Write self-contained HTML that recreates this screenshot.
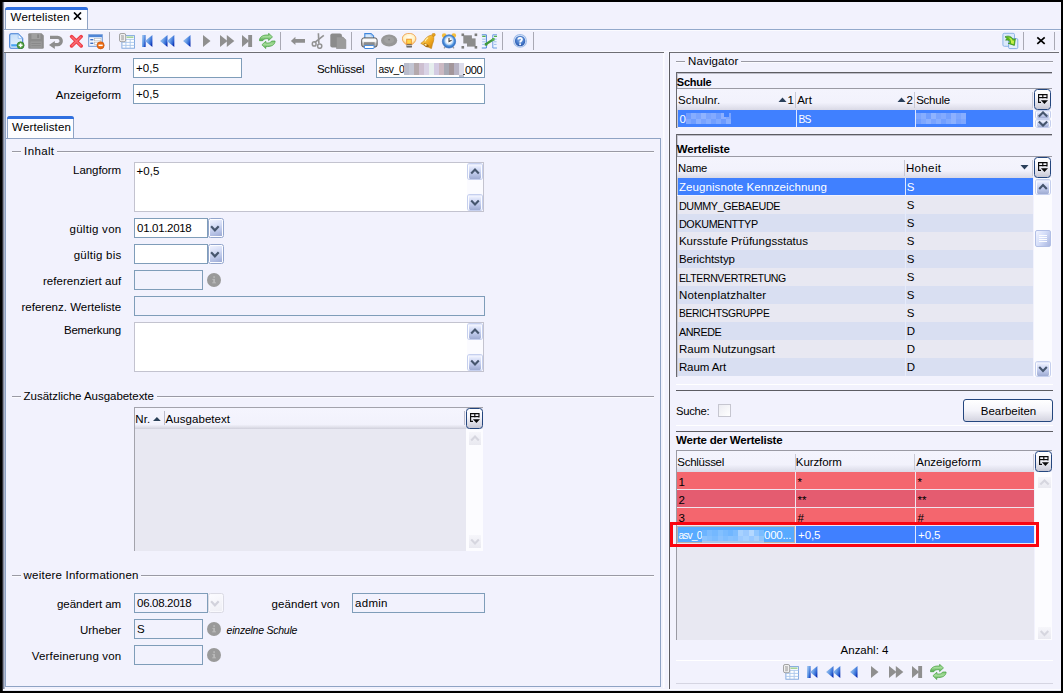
<!DOCTYPE html>
<html><head><meta charset="utf-8"><title>Wertelisten</title>
<style>
html,body{margin:0;padding:0;}
body{width:1063px;height:693px;overflow:hidden;background:#000;font-family:"Liberation Sans",sans-serif;font-size:11.5px;position:relative;}
#app{position:absolute;left:0;top:0;width:1063px;height:693px;overflow:hidden;}
#app div,#app svg{position:absolute;box-sizing:border-box;}
.t{font-family:"Liberation Sans",sans-serif;}
</style></head><body><div id="app">
<div style="left:2px;top:2px;width:1059px;height:689px;background:#f2f2fd"></div>
<div style="left:2px;top:689px;width:1059px;height:1px;background:#fbfbff"></div>
<div style="left:2px;top:690px;width:1059px;height:1px;background:#e4e6f0"></div>
<div style="left:2px;top:2px;width:1px;height:689px;background:#333338"></div>
<div style="left:3px;top:2px;width:1px;height:687px;background:#80869a"></div>
<div style="left:4px;top:2px;width:1px;height:50px;background:#e6e9f4"></div>
<div style="left:4px;top:52px;width:1px;height:637px;background:#b0b9cd"></div>
<div style="left:5px;top:52px;width:1px;height:87px;background:#8fa3c4"></div>
<div style="left:5px;top:7px;width:83px;height:23px;background:#fdfdff;border:1px solid #8fa3c4;border-bottom:none;border-radius:3px 3px 0 0;"></div>
<div style="left:5px;top:7px;width:83px;height:3px;background:#2f6fe0;border-radius:3px 3px 0 0;"></div>
<div class="t" style="top:12.17px;font-size:11.5px;line-height:11.5px;color:#000;white-space:pre;letter-spacing:0.181px;left:10.60px;">Wertelisten</div>
<svg style="left:73px;top:12px" width="9" height="8" viewBox="0 0 9 8"><path d="M1 0.5 L8 7.5 M8 0.5 L1 7.5" stroke="#000" stroke-width="1.7" fill="none"/></svg>
<div style="left:4px;top:29px;width:1057px;height:1px;background:#93a9cb"></div>
<div style="left:4px;top:30px;width:1057px;height:1px;background:#fbfbff"></div>
<div style="left:4px;top:52px;width:660px;height:1px;background:#6e6e74"></div>
<div style="left:669px;top:52px;width:390px;height:1px;background:#6e6e74"></div>
<div style="left:4px;top:51px;width:1055px;height:1px;background:#f9f9ff"></div>
<div style="left:109px;top:32px;width:1px;height:18px;background:#a9a9b4"></div>
<div style="left:280px;top:32px;width:1px;height:18px;background:#a9a9b4"></div>
<div style="left:351px;top:32px;width:1px;height:18px;background:#a9a9b4"></div>
<div style="left:502px;top:32px;width:1px;height:18px;background:#a9a9b4"></div>
<div style="left:533px;top:32px;width:1px;height:18px;background:#a9a9b4"></div>
<div style="left:1023px;top:32px;width:1px;height:18px;background:#a9a9b4"></div>
<div style="left:1054px;top:32px;width:1px;height:18px;background:#a9a9b4"></div>
<div class="t" style="top:64.17px;font-size:11.5px;line-height:11.5px;color:#000;white-space:pre;letter-spacing:-0.007px;right:941.81px;">Kurzform</div>
<div style="left:133px;top:58px;width:109px;height:20px;background:#fff;border:1px solid #7f9db9;"></div>
<div class="t" style="top:63.17px;font-size:11.5px;line-height:11.5px;color:#000;white-space:pre;letter-spacing:0.024px;left:136.10px;">+0,5</div>
<div class="t" style="top:64.17px;font-size:11.5px;line-height:11.5px;color:#000;white-space:pre;letter-spacing:-0.191px;left:316.90px;">Schlüssel</div>
<div style="left:376px;top:58px;width:109px;height:20px;background:#fff;border:1px solid #7f9db9;"></div>
<div class="t" style="top:65.22px;font-size:10.25px;line-height:10.25px;color:#000;white-space:pre;letter-spacing:-0.310px;left:378.60px;">asv_0</div>
<div style="left:404px;top:63px;width:5px;height:6px;background:#b9bccb"></div>
<div style="left:409px;top:63px;width:5px;height:6px;background:#c3c6d4"></div>
<div style="left:414px;top:63px;width:5px;height:6px;background:#b4a9ad"></div>
<div style="left:419px;top:63px;width:5px;height:6px;background:#cdbfd0"></div>
<div style="left:424px;top:63px;width:5px;height:6px;background:#d9d3e6"></div>
<div style="left:429px;top:63px;width:5px;height:6px;background:#e6efee"></div>
<div style="left:434px;top:63px;width:5px;height:6px;background:#d3cbe2"></div>
<div style="left:439px;top:63px;width:5px;height:6px;background:#cbb9c2"></div>
<div style="left:444px;top:63px;width:5px;height:6px;background:#a7a9b4"></div>
<div style="left:449px;top:63px;width:5px;height:6px;background:#a3969a"></div>
<div style="left:454px;top:63px;width:5px;height:6px;background:#b7b3c4"></div>
<div style="left:459px;top:63px;width:5px;height:6px;background:#dcdcea"></div>
<div style="left:404px;top:69px;width:5px;height:6px;background:#b9bccb"></div>
<div style="left:409px;top:69px;width:5px;height:6px;background:#c3c6d4"></div>
<div style="left:414px;top:69px;width:5px;height:6px;background:#b4a9ad"></div>
<div style="left:419px;top:69px;width:5px;height:6px;background:#cdbfd0"></div>
<div style="left:424px;top:69px;width:5px;height:6px;background:#d9d3e6"></div>
<div style="left:429px;top:69px;width:5px;height:6px;background:#e6efee"></div>
<div style="left:434px;top:69px;width:5px;height:6px;background:#d3cbe2"></div>
<div style="left:439px;top:69px;width:5px;height:6px;background:#cbb9c2"></div>
<div style="left:444px;top:69px;width:5px;height:6px;background:#a7a9b4"></div>
<div style="left:449px;top:69px;width:5px;height:6px;background:#a3969a"></div>
<div style="left:454px;top:69px;width:5px;height:6px;background:#b7b3c4"></div>
<div style="left:459px;top:69px;width:5px;height:6px;background:#dcdcea"></div>
<div style="left:459px;top:75px;width:5px;height:2px;background:#b9bccb"></div>
<div class="t" style="top:64.59px;font-size:11.0px;line-height:11.0px;color:#000;white-space:pre;letter-spacing:-0.351px;left:464.90px;">000</div>
<div style="left:463px;top:74px;width:2px;height:1px;background:#333"></div>
<div class="t" style="top:90.17px;font-size:11.5px;line-height:11.5px;color:#000;white-space:pre;letter-spacing:0.094px;right:941.71px;">Anzeigeform</div>
<div style="left:133px;top:84px;width:352px;height:20px;background:#fff;border:1px solid #7f9db9;"></div>
<div class="t" style="top:89.17px;font-size:11.5px;line-height:11.5px;color:#000;white-space:pre;letter-spacing:0.024px;left:136.10px;">+0,5</div>
<div style="left:5px;top:138px;width:656px;height:549px;background:#f2f2fd;border:1px solid #8fa3c4;"></div>
<div style="left:7px;top:116px;width:67px;height:22px;background:#fdfdff;border:1px solid #8fa3c4;border-bottom:none;border-radius:3px 3px 0 0;"></div>
<div style="left:7px;top:116px;width:67px;height:3px;background:#2f6fe0;border-radius:3px 3px 0 0;"></div>
<div class="t" style="top:122.17px;font-size:11.5px;line-height:11.5px;color:#000;white-space:pre;letter-spacing:0.144px;left:12.10px;">Wertelisten</div>
<div style="left:12px;top:151px;width:9px;height:1px;background:#9a9aa4"></div>
<div style="left:12px;top:152px;width:9px;height:1px;background:#fbfbff"></div>
<div style="left:57.0px;top:151px;width:597.0px;height:1px;background:#9a9aa4"></div>
<div style="left:57.0px;top:152px;width:597.0px;height:1px;background:#fbfbff"></div>
<div class="t" style="top:146.17px;font-size:11.5px;line-height:11.5px;color:#000;white-space:pre;letter-spacing:0.360px;left:24.10px;">Inhalt</div>
<div class="t" style="top:165.17px;font-size:11.5px;line-height:11.5px;color:#000;white-space:pre;letter-spacing:-0.062px;right:941.86px;">Langform</div>
<div style="left:134px;top:162px;width:350px;height:50px;background:#fff;border:1px solid #c3c3cf;"></div>
<div class="t" style="top:166.17px;font-size:11.5px;line-height:11.5px;color:#000;white-space:pre;letter-spacing:0.024px;left:136.60px;">+0,5</div>
<div style="left:467px;top:163px;width:16px;height:48px;background:#fbfbff;"></div>
<div style="left:468px;top:164px;width:14px;height:15px;background:linear-gradient(180deg,#f3f5ff 0%,#dfe5fa 18%,#c3cdee 55%,#9eabd2 100%);border-left:1px solid #fbfcff;border-right:1px solid #fbfcff;border-top:1px solid #e3e8fa;border-radius:2px;box-shadow:0 0 0 1px #c5cfee;"></div>
<svg style="left:468px;top:164px" width="14" height="15" viewBox="0 0 14 15"><path d="M3.2 9.5 L7.0 5.5 L10.8 9.5" stroke="#46566e" stroke-width="2.1" fill="none"/></svg>
<div style="left:468px;top:195px;width:14px;height:15px;background:linear-gradient(180deg,#f3f5ff 0%,#dfe5fa 18%,#c3cdee 55%,#9eabd2 100%);border-left:1px solid #fbfcff;border-right:1px solid #fbfcff;border-top:1px solid #e3e8fa;border-radius:2px;box-shadow:0 0 0 1px #c5cfee;"></div>
<svg style="left:468px;top:195px" width="14" height="15" viewBox="0 0 14 15"><path d="M3.2 5.5 L7.0 9.5 L10.8 5.5" stroke="#46566e" stroke-width="2.1" fill="none"/></svg>
<div class="t" style="top:224.17px;font-size:11.5px;line-height:11.5px;color:#000;white-space:pre;letter-spacing:0.277px;right:941.52px;">gültig von</div>
<div style="left:134px;top:218px;width:74px;height:20px;background:#fff;border:1px solid #7f9db9;"></div>
<div class="t" style="top:223.17px;font-size:11.5px;line-height:11.5px;color:#000;white-space:pre;letter-spacing:-0.326px;left:137.10px;">01.01.2018</div>
<div style="left:208px;top:218px;width:16px;height:20px;background:#fdfdff;border:1px solid #93a6cc;border-radius:2.5px;"></div>
<div style="left:210px;top:220px;width:12px;height:16px;background:linear-gradient(160deg,#eff2fe 0%,#d3dbf5 40%,#b4c0e4 75%,#9ba9d4 100%);"></div>
<svg style="left:208px;top:218px" width="16" height="20" viewBox="0 0 16 20"><path d="M3.1 8.3 L6.9 12.3 L10.7 8.3" stroke="#46566e" stroke-width="2.2" fill="none"/></svg>
<div class="t" style="top:250.17px;font-size:11.5px;line-height:11.5px;color:#000;white-space:pre;letter-spacing:0.241px;right:941.56px;">gültig bis</div>
<div style="left:134px;top:244px;width:74px;height:20px;background:#fff;border:1px solid #7f9db9;"></div>
<div style="left:208px;top:244px;width:16px;height:20px;background:#fdfdff;border:1px solid #93a6cc;border-radius:2.5px;"></div>
<div style="left:210px;top:246px;width:12px;height:16px;background:linear-gradient(160deg,#eff2fe 0%,#d3dbf5 40%,#b4c0e4 75%,#9ba9d4 100%);"></div>
<svg style="left:208px;top:244px" width="16" height="20" viewBox="0 0 16 20"><path d="M3.1 8.3 L6.9 12.3 L10.7 8.3" stroke="#46566e" stroke-width="2.2" fill="none"/></svg>
<div class="t" style="top:276.17px;font-size:11.5px;line-height:11.5px;color:#000;white-space:pre;letter-spacing:0.065px;right:941.73px;">referenziert auf</div>
<div style="left:134px;top:270px;width:69px;height:20px;background:#f2f2fd;border:1px solid #7f9db9;"></div>
<svg style="left:206px;top:272px" width="16" height="16" viewBox="0 0 16 16"><circle cx="8" cy="8" r="7" fill="#9a9a9a"/><g fill="#bcbcbc"><rect x="7.3" y="4.3" width="1.6" height="1.5"/><rect x="7.3" y="6.9" width="1.6" height="4"/><rect x="6.4" y="6.9" width="1.2" height="0.9"/><rect x="6.2" y="10.4" width="3.8" height="0.9"/></g></svg>
<div class="t" style="top:302.17px;font-size:11.5px;line-height:11.5px;color:#000;white-space:pre;letter-spacing:0.015px;right:941.79px;">referenz. Werteliste</div>
<div style="left:134px;top:296px;width:351px;height:20px;background:#f2f2fd;border:1px solid #7f9db9;"></div>
<div class="t" style="top:325.17px;font-size:11.5px;line-height:11.5px;color:#000;white-space:pre;letter-spacing:-0.190px;right:941.99px;">Bemerkung</div>
<div style="left:134px;top:322px;width:350px;height:50px;background:#fff;border:1px solid #c3c3cf;"></div>
<div style="left:467px;top:323px;width:16px;height:48px;background:#fbfbff;"></div>
<div style="left:468px;top:324px;width:14px;height:15px;background:linear-gradient(180deg,#f3f5ff 0%,#dfe5fa 18%,#c3cdee 55%,#9eabd2 100%);border-left:1px solid #fbfcff;border-right:1px solid #fbfcff;border-top:1px solid #e3e8fa;border-radius:2px;box-shadow:0 0 0 1px #c5cfee;"></div>
<svg style="left:468px;top:324px" width="14" height="15" viewBox="0 0 14 15"><path d="M3.2 9.5 L7.0 5.5 L10.8 9.5" stroke="#46566e" stroke-width="2.1" fill="none"/></svg>
<div style="left:468px;top:355px;width:14px;height:15px;background:linear-gradient(180deg,#f3f5ff 0%,#dfe5fa 18%,#c3cdee 55%,#9eabd2 100%);border-left:1px solid #fbfcff;border-right:1px solid #fbfcff;border-top:1px solid #e3e8fa;border-radius:2px;box-shadow:0 0 0 1px #c5cfee;"></div>
<svg style="left:468px;top:355px" width="14" height="15" viewBox="0 0 14 15"><path d="M3.2 5.5 L7.0 9.5 L10.8 5.5" stroke="#46566e" stroke-width="2.1" fill="none"/></svg>
<div style="left:12px;top:396px;width:9px;height:1px;background:#9a9aa4"></div>
<div style="left:12px;top:397px;width:9px;height:1px;background:#fbfbff"></div>
<div style="left:156.5px;top:396px;width:497.5px;height:1px;background:#9a9aa4"></div>
<div style="left:156.5px;top:397px;width:497.5px;height:1px;background:#fbfbff"></div>
<div class="t" style="top:391.17px;font-size:11.5px;line-height:11.5px;color:#000;white-space:pre;letter-spacing:-0.032px;left:23.60px;">Zusätzliche Ausgabetexte</div>
<div style="left:134px;top:407px;width:349px;height:144px;background:#e8e8f2;border-left:1px solid #a3a3ac;border-top:1px solid #a3a3ac;"></div>
<div style="left:135px;top:408px;width:331px;height:21px;background:linear-gradient(180deg,#f5f5fe 0%,#f2f2fc 78%,#e2e2ec 90%,#cfcfdb 100%);"></div>
<div class="t" style="top:414.17px;font-size:11.5px;line-height:11.5px;color:#000;white-space:pre;letter-spacing:0.132px;left:135.30px;">Nr.</div>
<div class="t" style="top:414.17px;font-size:11.5px;line-height:11.5px;color:#000;white-space:pre;letter-spacing:0.051px;left:165.60px;">Ausgabetext</div>
<svg style="left:152px;top:416px" width="10" height="6" viewBox="0 0 10 6"><path d="M0.2 5.4 L4.9 0.3 L9.6 5.4 Z" fill="#fff" opacity="0.7"/><path d="M1 4.9 L4.9 0.9 L8.8 4.9 Z" fill="#2a4058"/></svg>
<div style="left:164px;top:411px;width:1px;height:14px;background:#bcbccb"></div>
<div style="left:464px;top:411px;width:1px;height:14px;background:#bcbccb"></div>
<div style="left:466px;top:429px;width:17px;height:122px;background:#fcfcff;"></div>
<div style="left:466px;top:408px;width:17px;height:21px;background:linear-gradient(180deg,#ffffff 0%,#f6f6fb 40%,#dadae4 80%,#c6c6d3 100%);border:1px solid #24467e;border-radius:3.5px;"></div>
<svg style="left:466px;top:408px" width="17" height="21" viewBox="0 0 17 21"><g fill="none" stroke="#0a0a0a" stroke-width="1.15"><path d="M7 13.4 H4.6 V5.6 H13 V9.4"/><path d="M4.6 8.6 H13"/><path d="M8.8 5.6 V9.2"/></g><path d="M6.9 11.3 H14 L10.45 15 Z" fill="#0a0a0a"/></svg>
<div style="left:469px;top:432px;width:12px;height:13px;background:linear-gradient(180deg,#f6f6fb,#e9e9f0);"></div>
<svg style="left:469px;top:432px" width="12" height="13" viewBox="0 0 12 13"><path d="M2.2 8.5 L6.0 4.5 L9.8 8.5" stroke="#d6d6df" stroke-width="2.1" fill="none"/></svg>
<div style="left:469px;top:535px;width:12px;height:13px;background:linear-gradient(180deg,#f6f6fb,#e9e9f0);"></div>
<svg style="left:469px;top:535px" width="12" height="13" viewBox="0 0 12 13"><path d="M2.2 4.5 L6.0 8.5 L9.8 4.5" stroke="#d6d6df" stroke-width="2.1" fill="none"/></svg>
<div style="left:12px;top:575px;width:9px;height:1px;background:#9a9aa4"></div>
<div style="left:12px;top:576px;width:9px;height:1px;background:#fbfbff"></div>
<div style="left:141.2px;top:575px;width:512.8px;height:1px;background:#9a9aa4"></div>
<div style="left:141.2px;top:576px;width:512.8px;height:1px;background:#fbfbff"></div>
<div class="t" style="top:570.17px;font-size:11.5px;line-height:11.5px;color:#000;white-space:pre;letter-spacing:0.210px;left:23.60px;">weitere Informationen</div>
<div class="t" style="top:599.17px;font-size:11.5px;line-height:11.5px;color:#000;white-space:pre;letter-spacing:-0.034px;right:941.83px;">geändert am</div>
<div style="left:134px;top:593px;width:74px;height:20px;background:#f2f2fd;border:1px solid #7f9db9;"></div>
<div class="t" style="top:598.17px;font-size:11.5px;line-height:11.5px;color:#000;white-space:pre;letter-spacing:-0.326px;left:137.10px;">06.08.2018</div>
<div style="left:208px;top:593px;width:16px;height:20px;background:#f9f9fd;border:1px solid #dadae4;border-radius:2.5px;"></div>
<div style="left:210px;top:595px;width:12px;height:16px;background:linear-gradient(160deg,#fbfbff,#efeff5);"></div>
<svg style="left:208px;top:593px" width="16" height="20" viewBox="0 0 16 20"><path d="M3.1 8.3 L6.9 12.3 L10.7 8.3" stroke="#d2d2dc" stroke-width="2.2" fill="none"/></svg>
<div class="t" style="top:599.17px;font-size:11.5px;line-height:11.5px;color:#000;white-space:pre;letter-spacing:0.105px;left:271.40px;">geändert von</div>
<div style="left:352px;top:593px;width:133px;height:20px;background:#f2f2fd;border:1px solid #7f9db9;"></div>
<div class="t" style="top:598.17px;font-size:11.5px;line-height:11.5px;color:#000;white-space:pre;letter-spacing:0.254px;left:355.10px;">admin</div>
<div class="t" style="top:625.17px;font-size:11.5px;line-height:11.5px;color:#000;white-space:pre;letter-spacing:-0.066px;right:941.87px;">Urheber</div>
<div style="left:134px;top:619px;width:69px;height:20px;background:#f2f2fd;border:1px solid #7f9db9;"></div>
<div class="t" style="top:624.17px;font-size:11.5px;line-height:11.5px;color:#000;white-space:pre;left:137.10px;">S</div>
<svg style="left:206px;top:621px" width="16" height="16" viewBox="0 0 16 16"><circle cx="8" cy="8" r="7" fill="#9a9a9a"/><g fill="#bcbcbc"><rect x="7.3" y="4.3" width="1.6" height="1.5"/><rect x="7.3" y="6.9" width="1.6" height="4"/><rect x="6.4" y="6.9" width="1.2" height="0.9"/><rect x="6.2" y="10.4" width="3.8" height="0.9"/></g></svg>
<div class="t" style="top:625.01px;font-size:10.5px;line-height:10.5px;color:#000;white-space:pre;font-style:italic;letter-spacing:-0.243px;left:226.60px;">einzelne Schule</div>
<div class="t" style="top:651.17px;font-size:11.5px;line-height:11.5px;color:#000;white-space:pre;letter-spacing:0.165px;right:941.63px;">Verfeinerung von</div>
<div style="left:134px;top:645px;width:69px;height:20px;background:#f2f2fd;border:1px solid #7f9db9;"></div>
<svg style="left:206px;top:647px" width="16" height="16" viewBox="0 0 16 16"><circle cx="8" cy="8" r="7" fill="#9a9a9a"/><g fill="#bcbcbc"><rect x="7.3" y="4.3" width="1.6" height="1.5"/><rect x="7.3" y="6.9" width="1.6" height="4"/><rect x="6.4" y="6.9" width="1.2" height="0.9"/><rect x="6.2" y="10.4" width="3.8" height="0.9"/></g></svg>
<div style="left:663px;top:53px;width:1px;height:635px;background:#fdfdff"></div>
<div style="left:664px;top:52px;width:1px;height:636px;background:#f8f8ff"></div>
<div style="left:668px;top:51px;width:1px;height:638px;background:#fafaff"></div>
<div style="left:669px;top:52px;width:1px;height:637px;background:#5d5d63"></div>
<div style="left:676px;top:61px;width:9px;height:1px;background:#9a9aa4"></div>
<div style="left:741px;top:61px;width:312px;height:1px;background:#9a9aa4"></div>
<div style="left:676px;top:62px;width:9px;height:1px;background:#fbfbff"></div>
<div style="left:741px;top:62px;width:312px;height:1px;background:#fbfbff"></div>
<div class="t" style="top:56.17px;font-size:11.5px;line-height:11.5px;color:#000;white-space:pre;letter-spacing:0.120px;left:688.10px;">Navigator</div>
<div style="left:676px;top:72px;width:376px;height:1px;background:#5d5d63"></div>
<div style="left:676px;top:73px;width:376px;height:1px;background:#bdbdc8"></div>
<div style="left:676px;top:72px;width:1px;height:56px;background:#6a6a70"></div>
<div style="left:677px;top:74px;width:1px;height:54px;background:#c9c9d4"></div>
<div class="t" style="top:76.59px;font-size:11.0px;line-height:11.0px;color:#000;white-space:pre;font-weight:bold;letter-spacing:-0.246px;left:676.80px;">Schule</div>
<div style="left:677px;top:88px;width:375px;height:1px;background:#9a9aa4"></div>
<div style="left:677px;top:89px;width:356px;height:21px;background:linear-gradient(180deg,#f4f4fd 0%,#f2f2fc 65%,#d9d9e6 100%);"></div>
<div class="t" style="top:95.17px;font-size:11.5px;line-height:11.5px;color:#000;white-space:pre;letter-spacing:0.080px;left:678.10px;">Schulnr.</div>
<div class="t" style="top:95.17px;font-size:11.5px;line-height:11.5px;color:#000;white-space:pre;letter-spacing:-0.001px;left:797.20px;">Art</div>
<div class="t" style="top:95.17px;font-size:11.5px;line-height:11.5px;color:#000;white-space:pre;letter-spacing:-0.245px;left:916.20px;">Schule</div>
<svg style="left:778px;top:96px" width="10" height="7" viewBox="0 0 10 7"><path d="M0.5 6 L4.5 1.5 L8.5 6 Z" fill="#2a3f5a"/></svg>
<div class="t" style="top:95.17px;font-size:11.5px;line-height:11.5px;color:#000;white-space:pre;left:787.60px;">1</div>
<svg style="left:897px;top:96px" width="10" height="7" viewBox="0 0 10 7"><path d="M0.5 6 L4.5 1.5 L8.5 6 Z" fill="#2a3f5a"/></svg>
<div class="t" style="top:95.17px;font-size:11.5px;line-height:11.5px;color:#000;white-space:pre;left:906.60px;">2</div>
<div style="left:795px;top:92px;width:1px;height:16px;background:#c9c9d4"></div>
<div style="left:914px;top:92px;width:1px;height:16px;background:#c9c9d4"></div>
<div style="left:1032px;top:92px;width:1px;height:16px;background:#c9c9d4"></div>
<div style="left:678px;top:110px;width:355px;height:17px;background:#4080ff"></div>
<div style="left:796px;top:110px;width:1px;height:17px;background:#dfe8ff"></div>
<div style="left:915px;top:110px;width:1px;height:17px;background:#dfe8ff"></div>
<div class="t" style="top:114.17px;font-size:11.5px;line-height:11.5px;color:#fff;white-space:pre;left:679.60px;">0</div>
<div style="left:686px;top:113px;width:5px;height:6px;background:#6d9bff"></div>
<div style="left:686px;top:119px;width:5px;height:5px;background:#7ea7ff"></div>
<div style="left:691px;top:113px;width:5px;height:6px;background:#86adff"></div>
<div style="left:691px;top:119px;width:5px;height:5px;background:#6f9dff"></div>
<div style="left:696px;top:113px;width:5px;height:6px;background:#7aa4ff"></div>
<div style="left:696px;top:119px;width:5px;height:5px;background:#8bb0ff"></div>
<div style="left:701px;top:113px;width:5px;height:6px;background:#8fb3ff"></div>
<div style="left:701px;top:119px;width:5px;height:5px;background:#79a3ff"></div>
<div style="left:706px;top:113px;width:5px;height:6px;background:#7aa4ff"></div>
<div style="left:706px;top:119px;width:5px;height:5px;background:#86adff"></div>
<div style="left:711px;top:113px;width:5px;height:6px;background:#83aaff"></div>
<div style="left:711px;top:119px;width:5px;height:5px;background:#729fff"></div>
<div style="left:716px;top:113px;width:5px;height:6px;background:#6f9dff"></div>
<div style="left:716px;top:119px;width:5px;height:5px;background:#80a9ff"></div>
<div style="left:721px;top:113px;width:5px;height:6px;background:#8db0ff"></div>
<div style="left:721px;top:119px;width:5px;height:5px;background:#6c9aff"></div>
<div style="left:726px;top:113px;width:5px;height:6px;background:#7ba5ff"></div>
<div style="left:726px;top:119px;width:5px;height:5px;background:#88aeff"></div>
<div style="left:724px;top:113px;width:5px;height:4px;background:#4080ff"></div>
<div class="t" style="top:115.22px;font-size:10.25px;line-height:10.25px;color:#fff;white-space:pre;letter-spacing:-0.888px;left:798.50px;">BS</div>
<div style="left:916px;top:113px;width:5px;height:6px;background:#7aa4ff"></div>
<div style="left:916px;top:119px;width:5px;height:5px;background:#6f9dff"></div>
<div style="left:921px;top:113px;width:5px;height:6px;background:#86adff"></div>
<div style="left:921px;top:119px;width:5px;height:5px;background:#7ea7ff"></div>
<div style="left:926px;top:113px;width:5px;height:6px;background:#6f9dff"></div>
<div style="left:926px;top:119px;width:5px;height:5px;background:#8bb0ff"></div>
<div style="left:931px;top:113px;width:5px;height:6px;background:#8fb3ff"></div>
<div style="left:931px;top:119px;width:5px;height:5px;background:#79a3ff"></div>
<div style="left:936px;top:113px;width:5px;height:6px;background:#7aa4ff"></div>
<div style="left:936px;top:119px;width:5px;height:5px;background:#86adff"></div>
<div style="left:941px;top:113px;width:5px;height:6px;background:#83aaff"></div>
<div style="left:941px;top:119px;width:5px;height:5px;background:#729fff"></div>
<div style="left:946px;top:113px;width:5px;height:6px;background:#729fff"></div>
<div style="left:946px;top:119px;width:5px;height:5px;background:#80a9ff"></div>
<div style="left:951px;top:113px;width:5px;height:6px;background:#8db0ff"></div>
<div style="left:951px;top:119px;width:5px;height:5px;background:#8cb1ff"></div>
<div style="left:956px;top:113px;width:5px;height:6px;background:#7ba5ff"></div>
<div style="left:956px;top:119px;width:5px;height:5px;background:#76a1ff"></div>
<div style="left:961px;top:113px;width:5px;height:6px;background:#88aeff"></div>
<div style="left:961px;top:119px;width:5px;height:5px;background:#7ea7ff"></div>
<div style="left:1034px;top:89px;width:17px;height:21px;background:linear-gradient(180deg,#ffffff 0%,#f6f6fb 40%,#dadae4 80%,#c6c6d3 100%);border:1px solid #24467e;border-radius:3.5px;"></div>
<svg style="left:1034px;top:89px" width="17" height="21" viewBox="0 0 17 21"><g fill="none" stroke="#0a0a0a" stroke-width="1.15"><path d="M7 13.4 H4.6 V5.6 H13 V9.4"/><path d="M4.6 8.6 H13"/><path d="M8.8 5.6 V9.2"/></g><path d="M6.9 11.3 H14 L10.45 15 Z" fill="#0a0a0a"/></svg>
<div style="left:1034px;top:110px;width:18px;height:18px;background:#fcfcff"></div>
<div style="left:1036px;top:111px;width:14px;height:7px;background:linear-gradient(180deg,#f3f5ff 0%,#dfe5fa 18%,#c3cdee 55%,#9eabd2 100%);border-left:1px solid #fbfcff;border-right:1px solid #fbfcff;border-top:1px solid #e3e8fa;border-radius:2px;box-shadow:0 0 0 1px #c5cfee;"></div>
<svg style="left:1036px;top:111px" width="14" height="7" viewBox="0 0 14 7"><path d="M2.8 5.6 L7.0 1.4 L11.2 5.6" stroke="#46566e" stroke-width="2.1" fill="none"/></svg>
<div style="left:1036px;top:120px;width:14px;height:7px;background:linear-gradient(180deg,#f3f5ff 0%,#dfe5fa 18%,#c3cdee 55%,#9eabd2 100%);border-left:1px solid #fbfcff;border-right:1px solid #fbfcff;border-top:1px solid #e3e8fa;border-radius:2px;box-shadow:0 0 0 1px #c5cfee;"></div>
<svg style="left:1036px;top:120px" width="14" height="7" viewBox="0 0 14 7"><path d="M2.8 1.4 L7.0 5.6 L11.2 1.4" stroke="#46566e" stroke-width="2.1" fill="none"/></svg>
<div style="left:676px;top:134px;width:376px;height:1px;background:#5d5d63"></div>
<div style="left:676px;top:135px;width:376px;height:1px;background:#bdbdc8"></div>
<div style="left:676px;top:134px;width:1px;height:243px;background:#6a6a70"></div>
<div style="left:677px;top:136px;width:1px;height:241px;background:#c9c9d4"></div>
<div class="t" style="top:144.17px;font-size:11.5px;line-height:11.5px;color:#000;white-space:pre;font-weight:bold;letter-spacing:-0.187px;left:676.80px;">Werteliste</div>
<div style="left:677px;top:156px;width:375px;height:1px;background:#9a9aa4"></div>
<div style="left:677px;top:157px;width:356px;height:21px;background:linear-gradient(180deg,#f4f4fd 0%,#f2f2fc 65%,#d9d9e6 100%);"></div>
<div class="t" style="top:163.38px;font-size:11.25px;line-height:11.25px;color:#000;white-space:pre;letter-spacing:-0.255px;left:678.10px;">Name</div>
<div class="t" style="top:163.17px;font-size:11.5px;line-height:11.5px;color:#000;white-space:pre;letter-spacing:0.375px;left:905.90px;">Hoheit</div>
<div style="left:904px;top:160px;width:1px;height:16px;background:#c9c9d4"></div>
<div style="left:1032px;top:160px;width:1px;height:16px;background:#c9c9d4"></div>
<svg style="left:1020px;top:164px" width="10" height="7" viewBox="0 0 10 7"><path d="M0.5 1 L8.5 1 L4.5 5.5 Z" fill="#2a3f5a"/></svg>
<div style="left:1034px;top:157px;width:17px;height:21px;background:linear-gradient(180deg,#ffffff 0%,#f6f6fb 40%,#dadae4 80%,#c6c6d3 100%);border:1px solid #24467e;border-radius:3.5px;"></div>
<svg style="left:1034px;top:157px" width="17" height="21" viewBox="0 0 17 21"><g fill="none" stroke="#0a0a0a" stroke-width="1.15"><path d="M7 13.4 H4.6 V5.6 H13 V9.4"/><path d="M4.6 8.6 H13"/><path d="M8.8 5.6 V9.2"/></g><path d="M6.9 11.3 H14 L10.45 15 Z" fill="#0a0a0a"/></svg>
<div style="left:1034px;top:178px;width:18px;height:199px;background:#fcfcff"></div>
<div style="left:678px;top:178px;width:355px;height:17px;background:#4080ff"></div>
<div style="left:905px;top:178px;width:1px;height:17px;background:#dfe8ff"></div>
<div class="t" style="top:182.17px;font-size:11.5px;line-height:11.5px;color:#fff;white-space:pre;letter-spacing:0.089px;left:678.90px;">Zeugnisnote Kennzeichnung</div>
<div class="t" style="top:182.17px;font-size:11.5px;line-height:11.5px;color:#fff;white-space:pre;left:906.80px;">S</div>
<div style="left:678px;top:196px;width:355px;height:18px;background:#e8e8f2"></div>
<div style="left:905px;top:196px;width:1px;height:18px;background:#e6ebfa"></div>
<div class="t" style="top:200.80px;font-size:10.75px;line-height:10.75px;color:#000;white-space:pre;letter-spacing:-0.367px;left:678.90px;">DUMMY_GEBAEUDE</div>
<div class="t" style="top:200.17px;font-size:11.5px;line-height:11.5px;color:#000;white-space:pre;left:906.80px;">S</div>
<div style="left:678px;top:214px;width:355px;height:18px;background:#d9dff2"></div>
<div style="left:905px;top:214px;width:1px;height:18px;background:#e6ebfa"></div>
<div class="t" style="top:218.80px;font-size:10.75px;line-height:10.75px;color:#000;white-space:pre;letter-spacing:-0.320px;left:678.90px;">DOKUMENTTYP</div>
<div class="t" style="top:218.17px;font-size:11.5px;line-height:11.5px;color:#000;white-space:pre;left:906.80px;">S</div>
<div style="left:678px;top:232px;width:355px;height:18px;background:#e8e8f2"></div>
<div style="left:905px;top:232px;width:1px;height:18px;background:#e6ebfa"></div>
<div class="t" style="top:236.17px;font-size:11.5px;line-height:11.5px;color:#000;white-space:pre;letter-spacing:0.026px;left:678.90px;">Kursstufe Prüfungsstatus</div>
<div class="t" style="top:236.17px;font-size:11.5px;line-height:11.5px;color:#000;white-space:pre;left:906.80px;">S</div>
<div style="left:678px;top:250px;width:355px;height:18px;background:#d9dff2"></div>
<div style="left:905px;top:250px;width:1px;height:18px;background:#e6ebfa"></div>
<div class="t" style="top:254.17px;font-size:11.5px;line-height:11.5px;color:#000;white-space:pre;letter-spacing:-0.081px;left:678.90px;">Berichtstyp</div>
<div class="t" style="top:254.17px;font-size:11.5px;line-height:11.5px;color:#000;white-space:pre;left:906.80px;">S</div>
<div style="left:678px;top:268px;width:355px;height:18px;background:#e8e8f2"></div>
<div style="left:905px;top:268px;width:1px;height:18px;background:#e6ebfa"></div>
<div class="t" style="top:273.01px;font-size:10.5px;line-height:10.5px;color:#000;white-space:pre;letter-spacing:-0.363px;left:678.90px;">ELTERNVERTRETUNG</div>
<div class="t" style="top:272.17px;font-size:11.5px;line-height:11.5px;color:#000;white-space:pre;left:906.80px;">S</div>
<div style="left:678px;top:286px;width:355px;height:18px;background:#d9dff2"></div>
<div style="left:905px;top:286px;width:1px;height:18px;background:#e6ebfa"></div>
<div class="t" style="top:290.17px;font-size:11.5px;line-height:11.5px;color:#000;white-space:pre;letter-spacing:0.234px;left:678.90px;">Notenplatzhalter</div>
<div class="t" style="top:290.17px;font-size:11.5px;line-height:11.5px;color:#000;white-space:pre;left:906.80px;">S</div>
<div style="left:678px;top:304px;width:355px;height:18px;background:#e8e8f2"></div>
<div style="left:905px;top:304px;width:1px;height:18px;background:#e6ebfa"></div>
<div class="t" style="top:309.22px;font-size:10.25px;line-height:10.25px;color:#000;white-space:pre;letter-spacing:-0.330px;left:678.90px;">BERICHTSGRUPPE</div>
<div class="t" style="top:308.17px;font-size:11.5px;line-height:11.5px;color:#000;white-space:pre;left:906.80px;">S</div>
<div style="left:678px;top:322px;width:355px;height:18px;background:#d9dff2"></div>
<div style="left:905px;top:322px;width:1px;height:18px;background:#e6ebfa"></div>
<div class="t" style="top:326.80px;font-size:10.75px;line-height:10.75px;color:#000;white-space:pre;letter-spacing:-0.385px;left:678.90px;">ANREDE</div>
<div class="t" style="top:326.17px;font-size:11.5px;line-height:11.5px;color:#000;white-space:pre;left:906.80px;">D</div>
<div style="left:678px;top:340px;width:355px;height:18px;background:#e8e8f2"></div>
<div style="left:905px;top:340px;width:1px;height:18px;background:#e6ebfa"></div>
<div class="t" style="top:344.17px;font-size:11.5px;line-height:11.5px;color:#000;white-space:pre;letter-spacing:0.020px;left:678.90px;">Raum Nutzungsart</div>
<div class="t" style="top:344.17px;font-size:11.5px;line-height:11.5px;color:#000;white-space:pre;left:906.80px;">D</div>
<div style="left:678px;top:358px;width:355px;height:18px;background:#d9dff2"></div>
<div style="left:905px;top:358px;width:1px;height:18px;background:#e6ebfa"></div>
<div class="t" style="top:362.17px;font-size:11.5px;line-height:11.5px;color:#000;white-space:pre;letter-spacing:-0.080px;left:678.90px;">Raum Art</div>
<div class="t" style="top:362.17px;font-size:11.5px;line-height:11.5px;color:#000;white-space:pre;left:906.80px;">D</div>
<div style="left:677px;top:195px;width:356px;height:1px;background:#f2f2fd"></div>
<div style="left:1036px;top:180px;width:14px;height:14px;background:linear-gradient(180deg,#f3f5ff 0%,#dfe5fa 18%,#c3cdee 55%,#9eabd2 100%);border-left:1px solid #fbfcff;border-right:1px solid #fbfcff;border-top:1px solid #e3e8fa;border-radius:2px;box-shadow:0 0 0 1px #c5cfee;"></div>
<svg style="left:1036px;top:180px" width="14" height="14" viewBox="0 0 14 14"><path d="M3.2 9.0 L7.0 5.0 L10.8 9.0" stroke="#46566e" stroke-width="2.1" fill="none"/></svg>
<div style="left:1036px;top:362px;width:14px;height:14px;background:linear-gradient(180deg,#f3f5ff 0%,#dfe5fa 18%,#c3cdee 55%,#9eabd2 100%);border-left:1px solid #fbfcff;border-right:1px solid #fbfcff;border-top:1px solid #e3e8fa;border-radius:2px;box-shadow:0 0 0 1px #c5cfee;"></div>
<svg style="left:1036px;top:362px" width="14" height="14" viewBox="0 0 14 14"><path d="M3.2 5.0 L7.0 9.0 L10.8 5.0" stroke="#46566e" stroke-width="2.1" fill="none"/></svg>
<div style="left:1035px;top:230px;width:16px;height:17px;background:linear-gradient(120deg,#f1f4ff 0%,#d5def9 45%,#a9b6e0 100%);border:1px solid #b2bfe6;border-radius:2px;"></div>
<div style="left:1039px;top:235px;width:8px;height:1px;background:#fbfcff"></div>
<div style="left:1039px;top:237px;width:8px;height:1px;background:#fbfcff"></div>
<div style="left:1039px;top:239px;width:8px;height:1px;background:#fbfcff"></div>
<div style="left:1039px;top:241px;width:8px;height:1px;background:#fbfcff"></div>
<div style="left:676px;top:384px;width:377px;height:1px;background:#ffffff"></div>
<div style="left:676px;top:390px;width:377px;height:1px;background:#5d5d63"></div>
<div class="t" style="top:406.38px;font-size:11.25px;line-height:11.25px;color:#000;white-space:pre;letter-spacing:-0.289px;left:676.10px;">Suche:</div>
<div style="left:718px;top:404px;width:13px;height:13px;background:linear-gradient(135deg,#ececf2,#ffffff);border:1px solid #c6c6d0;"></div>
<div style="left:963px;top:399px;width:90px;height:23px;background:linear-gradient(180deg,#ffffff 0%,#f4f4fa 50%,#d4d4e0 100%);border:1px solid #24467e;border-radius:3px;"></div>
<div class="t" style="top:406.17px;font-size:11.5px;line-height:11.5px;color:#000;white-space:pre;letter-spacing:-0.023px;left:980.80px;">Bearbeiten</div>
<div style="left:676px;top:425px;width:377px;height:1px;background:#ffffff"></div>
<div style="left:676px;top:431px;width:377px;height:1px;background:#5d5d63"></div>
<div class="t" style="top:435.17px;font-size:11.5px;line-height:11.5px;color:#000;white-space:pre;font-weight:bold;letter-spacing:-0.225px;left:676.10px;">Werte der Werteliste</div>
<div style="left:676px;top:450px;width:358px;height:190px;background:#e8e8f2;border-left:1px solid #9a9aa4;border-top:1px solid #9a9aa4;"></div>
<div style="left:677px;top:450px;width:375px;height:1px;background:#9a9aa4"></div>
<div style="left:677px;top:451px;width:357px;height:21px;background:linear-gradient(180deg,#f4f4fd 0%,#f2f2fc 65%,#d9d9e6 100%);"></div>
<div class="t" style="top:457.17px;font-size:11.5px;line-height:11.5px;color:#000;white-space:pre;letter-spacing:-0.280px;left:677.30px;">Schlüssel</div>
<div class="t" style="top:457.17px;font-size:11.5px;line-height:11.5px;color:#000;white-space:pre;letter-spacing:-0.082px;left:795.80px;">Kurzform</div>
<div class="t" style="top:457.17px;font-size:11.5px;line-height:11.5px;color:#000;white-space:pre;letter-spacing:0.022px;left:916.20px;">Anzeigeform</div>
<div style="left:795px;top:454px;width:1px;height:16px;background:#c9c9d4"></div>
<div style="left:914px;top:454px;width:1px;height:16px;background:#c9c9d4"></div>
<div style="left:1033px;top:454px;width:1px;height:16px;background:#c9c9d4"></div>
<div style="left:1035px;top:451px;width:17px;height:21px;background:linear-gradient(180deg,#ffffff 0%,#f6f6fb 40%,#dadae4 80%,#c6c6d3 100%);border:1px solid #24467e;border-radius:3.5px;"></div>
<svg style="left:1035px;top:451px" width="17" height="21" viewBox="0 0 17 21"><g fill="none" stroke="#0a0a0a" stroke-width="1.15"><path d="M7 13.4 H4.6 V5.6 H13 V9.4"/><path d="M4.6 8.6 H13"/><path d="M8.8 5.6 V9.2"/></g><path d="M6.9 11.3 H14 L10.45 15 Z" fill="#0a0a0a"/></svg>
<div style="left:1035px;top:472px;width:17px;height:168px;background:#fcfcff"></div>
<div style="left:1038px;top:477px;width:13px;height:11px;background:linear-gradient(180deg,#f6f6fb,#e9e9f0);"></div>
<svg style="left:1038px;top:477px" width="13" height="11" viewBox="0 0 13 11"><path d="M2.3 7.6 L6.5 3.4 L10.7 7.6" stroke="#d6d6df" stroke-width="2.1" fill="none"/></svg>
<div style="left:1038px;top:627px;width:13px;height:12px;background:linear-gradient(180deg,#f6f6fb,#e9e9f0);"></div>
<svg style="left:1038px;top:627px" width="13" height="12" viewBox="0 0 13 12"><path d="M2.7 4.0 L6.5 8.0 L10.3 4.0" stroke="#d6d6df" stroke-width="2.1" fill="none"/></svg>
<div style="left:677px;top:472px;width:357px;height:17px;background:#f4666e"></div>
<div style="left:677px;top:489px;width:357px;height:1px;background:#f0e4ee"></div>
<div style="left:795px;top:472px;width:1px;height:17px;background:#f0e4ee"></div>
<div style="left:915px;top:472px;width:1px;height:17px;background:#f0e4ee"></div>
<div class="t" style="top:477.17px;font-size:11.5px;line-height:11.5px;color:#000;white-space:pre;left:678.60px;">1</div>
<div class="t" style="top:477.17px;font-size:11.5px;line-height:11.5px;color:#000;white-space:pre;left:797.60px;">*</div>
<div class="t" style="top:477.17px;font-size:11.5px;line-height:11.5px;color:#000;white-space:pre;left:917.60px;">*</div>
<div style="left:677px;top:490px;width:357px;height:17px;background:#e45c70"></div>
<div style="left:677px;top:507px;width:357px;height:1px;background:#f0e4ee"></div>
<div style="left:795px;top:490px;width:1px;height:17px;background:#f0e4ee"></div>
<div style="left:915px;top:490px;width:1px;height:17px;background:#f0e4ee"></div>
<div class="t" style="top:495.17px;font-size:11.5px;line-height:11.5px;color:#000;white-space:pre;left:678.60px;">2</div>
<div class="t" style="top:495.17px;font-size:11.5px;line-height:11.5px;color:#000;white-space:pre;left:797.60px;">**</div>
<div class="t" style="top:495.17px;font-size:11.5px;line-height:11.5px;color:#000;white-space:pre;left:917.60px;">**</div>
<div style="left:677px;top:508px;width:357px;height:17px;background:#f4666e"></div>
<div style="left:677px;top:525px;width:357px;height:1px;background:#f0e4ee"></div>
<div style="left:795px;top:508px;width:1px;height:17px;background:#f0e4ee"></div>
<div style="left:915px;top:508px;width:1px;height:17px;background:#f0e4ee"></div>
<div class="t" style="top:513.17px;font-size:11.5px;line-height:11.5px;color:#000;white-space:pre;left:678.60px;">3</div>
<div class="t" style="top:513.17px;font-size:11.5px;line-height:11.5px;color:#000;white-space:pre;left:797.60px;">#</div>
<div class="t" style="top:513.17px;font-size:11.5px;line-height:11.5px;color:#000;white-space:pre;left:917.60px;">#</div>
<div style="left:677px;top:526px;width:357px;height:17px;background:#4080ff"></div>
<div style="left:795px;top:526px;width:1px;height:17px;background:#dfe8ff"></div>
<div style="left:915px;top:526px;width:1px;height:17px;background:#dfe8ff"></div>
<div style="left:677px;top:526px;width:118px;height:17px;background:#57aaff;border:1px solid #b4b4b4;"></div>
<div class="t" style="top:531.22px;font-size:10.25px;line-height:10.25px;color:#fff;white-space:pre;letter-spacing:-0.830px;left:678.40px;">asv_0</div>
<div class="t" style="top:530.17px;font-size:11.5px;line-height:11.5px;color:#fff;white-space:pre;letter-spacing:-0.280px;left:764.10px;">000...</div>
<div style="left:702px;top:530px;width:5px;height:6px;background:#6cb4ff"></div>
<div style="left:702px;top:536px;width:5px;height:5px;background:#8cc4ff"></div>
<div style="left:707px;top:530px;width:5px;height:6px;background:#7cbcff"></div>
<div style="left:707px;top:536px;width:5px;height:5px;background:#84c0ff"></div>
<div style="left:712px;top:530px;width:6px;height:6px;background:#74b8ff"></div>
<div style="left:712px;top:536px;width:6px;height:5px;background:#7cbcff"></div>
<div style="left:718px;top:530px;width:5px;height:6px;background:#82c0ff"></div>
<div style="left:718px;top:536px;width:5px;height:5px;background:#8ac2ff"></div>
<div style="left:723px;top:530px;width:5px;height:6px;background:#78baff"></div>
<div style="left:723px;top:536px;width:5px;height:5px;background:#80beff"></div>
<div style="left:728px;top:530px;width:5px;height:6px;background:#70b6ff"></div>
<div style="left:728px;top:536px;width:5px;height:5px;background:#88c2ff"></div>
<div style="left:733px;top:530px;width:5px;height:6px;background:#7cbcff"></div>
<div style="left:733px;top:536px;width:5px;height:5px;background:#84c0ff"></div>
<div style="left:738px;top:530px;width:5px;height:6px;background:#a8d2ff"></div>
<div style="left:738px;top:536px;width:5px;height:5px;background:#9ccaff"></div>
<div style="left:743px;top:530px;width:6px;height:6px;background:#9ccaff"></div>
<div style="left:743px;top:536px;width:6px;height:5px;background:#a4d0ff"></div>
<div style="left:749px;top:530px;width:5px;height:6px;background:#b4d8ff"></div>
<div style="left:749px;top:536px;width:5px;height:5px;background:#98c8ff"></div>
<div style="left:754px;top:530px;width:5px;height:6px;background:#90c6ff"></div>
<div style="left:754px;top:536px;width:5px;height:5px;background:#a8d0fb"></div>
<div style="left:759px;top:530px;width:5px;height:6px;background:#7abcff"></div>
<div style="left:759px;top:536px;width:5px;height:5px;background:#8ec4fb"></div>
<div style="left:702px;top:541px;width:62px;height:2px;background:#a6c6ea"></div>
<div class="t" style="top:530.17px;font-size:11.5px;line-height:11.5px;color:#fff;white-space:pre;letter-spacing:-0.101px;left:798.10px;">+0,5</div>
<div class="t" style="top:530.17px;font-size:11.5px;line-height:11.5px;color:#fff;white-space:pre;letter-spacing:-0.101px;left:918.10px;">+0,5</div>
<div style="left:670px;top:522px;width:369px;height:25px;border:3px solid #fb0510;"></div>
<div class="t" style="top:645.17px;font-size:11.5px;line-height:11.5px;color:#000;white-space:pre;letter-spacing:-0.017px;left:840.60px;">Anzahl: 4</div>
<div style="left:676px;top:660px;width:377px;height:1px;background:#ffffff"></div>
<div style="left:676px;top:683px;width:377px;height:1px;background:#d5d5e2"></div>
<svg style="left:0;top:0" width="0" height="0"><defs>
<linearGradient id="gb" x1="0" y1="0.1" x2="1" y2="0.7"><stop offset="0" stop-color="#b0cef4"/><stop offset="0.5" stop-color="#6a9fe6"/><stop offset="0.82" stop-color="#2f66d4"/><stop offset="1" stop-color="#0a2cb0"/></linearGradient>
<linearGradient id="gg" x1="0" y1="0" x2="0" y2="1"><stop offset="0" stop-color="#7cc672"/><stop offset="0.45" stop-color="#a4dc9a"/><stop offset="1" stop-color="#4fa84a"/></linearGradient>
<linearGradient id="gpage" x1="0" y1="0" x2="0.3" y2="1"><stop offset="0" stop-color="#c2dcf8"/><stop offset="1" stop-color="#e6f2fe"/></linearGradient>
<radialGradient id="gbulb" cx="0.5" cy="0.4" r="0.6"><stop offset="0" stop-color="#fffef6"/><stop offset="0.65" stop-color="#fff2c4"/><stop offset="1" stop-color="#f8c878"/></radialGradient>
<linearGradient id="gbell" x1="0" y1="0" x2="1" y2="1"><stop offset="0" stop-color="#ffe27a"/><stop offset="0.6" stop-color="#f0a81e"/><stop offset="1" stop-color="#c77a08"/></linearGradient>
<radialGradient id="gclock" cx="0.5" cy="0.45" r="0.5"><stop offset="0.35" stop-color="#ffffff"/><stop offset="0.6" stop-color="#b5d3f5"/><stop offset="0.75" stop-color="#5a9be2"/><stop offset="1" stop-color="#2f6fc4"/></radialGradient>
<radialGradient id="ghelp" cx="0.5" cy="0.4" r="0.6"><stop offset="0" stop-color="#8db4ea"/><stop offset="0.7" stop-color="#3f73c6"/><stop offset="1" stop-color="#2a55a8"/></radialGradient>
<linearGradient id="gprn" x1="0" y1="0" x2="0" y2="1"><stop offset="0" stop-color="#f2f2f2"/><stop offset="0.35" stop-color="#fdfdfd"/><stop offset="0.6" stop-color="#c4c4c4"/><stop offset="1" stop-color="#9a9a9a"/></linearGradient>
</defs></svg>
<svg style="left:9px;top:33px" width="16" height="16" viewBox="0 0 16 16"><path d="M2 0.8 H9.2 L13.7 5.4 V13.8 Q13.7 15.2 12.3 15.2 H2 Q0.7 15.2 0.7 13.8 V2.2 Q0.7 0.8 2 0.8 Z" fill="url(#gpage)" stroke="#3d7bd2" stroke-width="1.1"/><path d="M9.2 1.2 V5.4 H13.4 Z" fill="#f4f9ff" stroke="#7fb0ec" stroke-width="0.7"/><rect x="2.2" y="11.2" width="6.5" height="2.3" fill="#4aa3f2"/><circle cx="11.6" cy="12.3" r="3.5" fill="#4f9d3e" stroke="#2f7a28" stroke-width="0.7"/><path d="M9.6 12.3H13.6M11.6 10.3V14.3" stroke="#fff" stroke-width="1.5"/></svg>
<svg style="left:28px;top:33px" width="16" height="16" viewBox="0 0 16 16"><path d="M1.4 0.3 H13.6 L15.8 2.5 V14.6 Q15.8 15.8 14.6 15.8 H1.4 Q0.2 15.8 0.2 14.6 V1.5 Q0.2 0.3 1.4 0.3 Z" fill="#8c8c8c"/><rect x="3.4" y="0.6" width="9" height="5.4" fill="#a0a0a0"/><rect x="9.2" y="1.4" width="1.9" height="3.6" fill="#868686"/><rect x="2.4" y="8.4" width="11.4" height="6.4" fill="#9a9a9a"/><path d="M3.4 10.5H12.8M3.4 12.6H12.8" stroke="#8a8a8a"/></svg>
<svg style="left:49px;top:35px" width="15" height="14" viewBox="0 0 15 14"><path d="M1 2.4 H8.6 A3.6 3.6 0 0 1 8.6 9.6 H5" fill="none" stroke="#8e8e8e" stroke-width="3.4"/><path d="M0 10 L5.8 6 V13.9 Z" fill="#8e8e8e"/></svg>
<svg style="left:69px;top:34px" width="15" height="14" viewBox="0 0 15 14"><path d="M2.6 2.6 L12.2 12 M12.2 2.6 L2.6 12" stroke="#ee3a44" stroke-width="3.5" stroke-linecap="round"/><path d="M3 3 L11.8 11.6 M11.8 3 L3 11.6" stroke="#f86a72" stroke-width="1.5" stroke-linecap="round"/></svg>
<svg style="left:88px;top:34px" width="17" height="16" viewBox="0 0 17 16"><rect x="0.7" y="0.7" width="13.6" height="11.6" fill="#f6f9ff" stroke="#6d97d6"/><rect x="1" y="1" width="13" height="2.2" fill="#4f86d6"/><rect x="2.3" y="5" width="3" height="1.4" fill="#3f6fc2"/><rect x="2.3" y="8.6" width="3" height="1.4" fill="#3f6fc2"/><rect x="6.5" y="4.6" width="6.5" height="2.2" fill="#fff" stroke="#b5b5b5" stroke-width="0.6"/><rect x="6.5" y="8.2" width="4" height="2.2" fill="#fff" stroke="#b5b5b5" stroke-width="0.6"/><circle cx="12.6" cy="11.3" r="3.6" fill="#ea6b12" stroke="#c2500a" stroke-width="0.6"/><rect x="10.5" y="10.6" width="4.2" height="1.5" fill="#fff"/></svg>
<svg style="left:119px;top:33px" width="17" height="16" viewBox="0 0 17 16"><rect x="2.9" y="2.6" width="12.6" height="12.6" fill="#fdfeff" stroke="#79a3dc" stroke-width="0.9"/><path d="M3 6.4H15.4M3 9.4H15.4M3 12.4H15.4M6.9 6.4V15M11.2 6.4V15" stroke="#a9c6ec" stroke-width="0.9" fill="none"/><rect x="7.5" y="3.6" width="7" height="1.1" fill="#7fc06f"/><rect x="0.5" y="0.5" width="6.2" height="8.2" rx="1.6" fill="#f0f0f0" stroke="#9a9a9a" stroke-width="0.9"/><rect x="2.6" y="2.4" width="2" height="4.6" fill="#c2c2c2" stroke="#a8a8a8" stroke-width="0.4"/></svg>
<svg style="left:142px;top:35px" width="11" height="12" viewBox="0 0 11 12"><rect x="0" y="0" width="3.6" height="12" fill="url(#gb)"/><path d="M10.4 0 L10.4 12 L3 6.0 Z" fill="url(#gb)"/></svg>
<svg style="left:160px;top:35px" width="15" height="12" viewBox="0 0 15 12"><path d="M7.5 0 L7.5 12 L0 6.0 Z" fill="url(#gb)"/><path d="M14.3 0 L14.3 12 L6.8 6.0 Z" fill="url(#gb)"/></svg>
<svg style="left:183px;top:35px" width="8" height="12" viewBox="0 0 8 12"><path d="M7.5 0 L7.5 12 L0 6.0 Z" fill="url(#gb)"/></svg>
<svg style="left:203px;top:35px" width="8" height="12" viewBox="0 0 8 12"><path d="M0 0 L0 12 L7.5 6.0 Z" fill="#8f8f8f"/></svg>
<svg style="left:220px;top:35px" width="15" height="12" viewBox="0 0 15 12"><path d="M0 0 L0 12 L7.5 6.0 Z" fill="#8f8f8f"/><path d="M6.8 0 L6.8 12 L14.3 6.0 Z" fill="#8f8f8f"/></svg>
<svg style="left:242px;top:35px" width="11" height="12" viewBox="0 0 11 12"><path d="M0 0 L0 12 L7.2 6.0 Z" fill="#8f8f8f"/><rect x="6.2" y="0" width="3.9" height="12" fill="#8f8f8f"/></svg>
<svg style="left:259px;top:33px" width="17" height="16" viewBox="0 0 17 16"><path d="M0.4 7.7 C0.5 3.2 5 1.5 9.6 2.1 V0.3 L13.5 3.9 L9.6 7.6 V5.8 C6.6 5.4 4.4 6 3.8 7.7 Z" fill="url(#gg)" stroke="#46a040" stroke-width="0.7" stroke-linejoin="round"/><path d="M16.1 8 C16 12.4 11.4 14 6.8 13.5 V15.5 L2.9 11.8 L6.8 8.2 V9.9 C9.8 10.3 12 9.7 12.6 8 Z" fill="url(#gg)" stroke="#46a040" stroke-width="0.7" stroke-linejoin="round"/></svg>
<svg style="left:290px;top:36px" width="16" height="10" viewBox="0 0 16 10"><path d="M0.9 4.9 L5.4 0.8 V3 H15 V6.8 H5.4 V9 Z" fill="#8f8f8f"/></svg>
<svg style="left:311px;top:33px" width="14" height="16" viewBox="0 0 14 16"><path d="M7.4 0.3 L7.9 10.6" stroke="#929292" stroke-width="1.6" fill="none"/><path d="M12.8 2.4 L3.6 9.6" stroke="#929292" stroke-width="1.6" fill="none"/><ellipse cx="3.2" cy="10.9" rx="1.9" ry="2.2" fill="none" stroke="#929292" stroke-width="1.5"/><circle cx="8.7" cy="13.2" r="2.1" fill="none" stroke="#929292" stroke-width="1.5"/></svg>
<svg style="left:330px;top:33px" width="17" height="16" viewBox="0 0 17 16"><rect x="0.3" y="0.4" width="11.6" height="14.2" rx="2" fill="#8b8b8b"/><path d="M6.5 4 H13 L15.9 6.8 V15.7 H6.5 Z" fill="#9b9b9b" stroke="#888" stroke-width="0.5"/></svg>
<svg style="left:361px;top:33px" width="17" height="16" viewBox="0 0 17 16"><path d="M3.8 0.6 H10 L12.6 3 V6 H3.8 Z" fill="#d6e8fc" stroke="#3f86dc" stroke-width="1.1"/><path d="M10 0.8 V3 H12.4" fill="none" stroke="#8fbaf0" stroke-width="0.7"/><rect x="0.7" y="4.9" width="15.4" height="9.2" rx="2.2" fill="url(#gprn)" stroke="#5a5a5a" stroke-width="1"/><rect x="3" y="9.2" width="10.6" height="3.2" fill="#8c8c8c"/><rect x="3.4" y="12.4" width="9.6" height="3.1" rx="0.6" fill="#fff" stroke="#3f86dc" stroke-width="1"/></svg>
<svg style="left:381px;top:34px" width="17" height="13" viewBox="0 0 17 13"><ellipse cx="8.1" cy="6.6" rx="8.1" ry="6" fill="#979797"/><ellipse cx="8.1" cy="6" rx="5" ry="3.4" fill="#a1a1a1"/><circle cx="8.1" cy="5.6" r="0.9" fill="#808080"/></svg>
<svg style="left:402px;top:33px" width="15" height="16" viewBox="0 0 15 16"><path d="M7.1 0.4 C11.6 0.4 13.9 3.2 13.9 5.9 C13.9 8.4 11.6 10 10.4 11.4 H3.8 C2.6 10 0.3 8.4 0.3 5.9 C0.3 3.2 2.6 0.4 7.1 0.4 Z" fill="url(#gbulb)" stroke="#f0a250" stroke-width="0.9"/><rect x="4.7" y="6.2" width="4.6" height="4.8" fill="#ffd84a" stroke="#ef8f2a" stroke-width="0.9"/><rect x="4.4" y="11.2" width="5.6" height="3.4" rx="0.9" fill="#5f5f5f"/><rect x="4.4" y="12.1" width="5.6" height="1" fill="#c9c9c9"/></svg>
<svg style="left:420px;top:33px" width="17" height="16" viewBox="0 0 17 16"><path d="M11.4 2.2 C8 2.6 5.6 5.2 3.9 8 L0.8 10.4 L11.4 15.6 L12.4 11.2 C13.8 8.2 14.2 5 13.4 3 Z" fill="url(#gbell)" stroke="#c58512" stroke-width="0.7"/><circle cx="13.7" cy="1.8" r="1.6" fill="#e6a11e" stroke="#c58512" stroke-width="0.5"/><ellipse cx="6.2" cy="12.3" rx="2.9" ry="1.5" transform="rotate(26 6.2 12.3)" fill="#a86a0c"/><ellipse cx="5.6" cy="11.7" rx="1.3" ry="0.8" transform="rotate(26 5.6 11.7)" fill="#fff0b0"/><path d="M8 4.6 C6.6 5.6 5.6 7 5 8.2" stroke="#fff3b8" stroke-width="1.1" fill="none"/></svg>
<svg style="left:441px;top:33px" width="16" height="16" viewBox="0 0 16 16"><circle cx="3.2" cy="2.6" r="2.3" fill="#f4bc3a"/><circle cx="12.8" cy="2.6" r="2.3" fill="#f4bc3a"/><path d="M3 15.4 L5 12.6 M13 15.4 L11 12.6" stroke="#9a9a9a" stroke-width="1.3"/><circle cx="8" cy="8.4" r="6.6" fill="url(#gclock)" stroke="#2f6cc0" stroke-width="0.7"/><path d="M8 5 V8.6 L10.6 7.2" stroke="#444" stroke-width="1.1" fill="none"/></svg>
<svg style="left:461px;top:33px" width="17" height="16" viewBox="0 0 17 16"><rect x="2.3" y="2.3" width="8.6" height="8.2" fill="#8c8c8c"/><rect x="6" y="5.4" width="8.6" height="8.2" fill="#8c8c8c"/><rect x="0.5" y="0.5" width="2.6" height="2.6" fill="#7d7d7d"/><rect x="13.6" y="0.5" width="2.6" height="2.6" fill="#7d7d7d"/><rect x="0.5" y="13" width="2.6" height="2.6" fill="#7d7d7d"/><rect x="13.6" y="13" width="2.6" height="2.6" fill="#7d7d7d"/></svg>
<svg style="left:481px;top:34px" width="17" height="15" viewBox="0 0 17 15"><path d="M0.8 0.8 H5.4 V14 H0.8" fill="#eef5ff" stroke="#4f86d6" stroke-width="1"/><path d="M16 0.8 H11.8 V14 H16" fill="#eef5ff" stroke="#6d9ade" stroke-width="1"/><path d="M1.2 2.4H4.6M13 2.4H16" stroke="#58b04e" stroke-width="1.2"/><path d="M1.2 5.2H4.6M1.2 7.8H4.6M1.2 10.4H4.6M13 5.2H15.6M13 7.8H15.6M13 10.4H15.6" stroke="#9dbde9" stroke-width="1"/><path d="M4.8 10.2 L12.6 5.2" stroke="#3f9a3a" stroke-width="2.2"/><rect x="3.8" y="9" width="2.6" height="2.6" fill="#3f9a3a"/><rect x="11" y="4" width="2.6" height="2.6" fill="#58b04e"/></svg>
<svg style="left:513px;top:34px" width="15" height="14" viewBox="0 0 15 14"><circle cx="7.1" cy="6.95" r="6.9" fill="#9fbce8"/><circle cx="7.1" cy="6.95" r="5.9" fill="#dfe9fa"/><circle cx="7.1" cy="6.95" r="5.2" fill="url(#ghelp)"/><path d="M5.2 5.6 C5.2 3.4 9 3.4 9 5.6 C9 7 7.1 7 7.1 8.5" fill="none" stroke="#fff" stroke-width="1.7"/><rect x="6.25" y="9.4" width="1.7" height="1.7" fill="#fff"/></svg>
<svg style="left:1002px;top:32px" width="17" height="18" viewBox="0 0 17 18"><rect x="0.9" y="1.3" width="11.6" height="13" rx="1.4" fill="#dbe9fb" stroke="#86afe4" stroke-width="0.9"/><rect x="6.6" y="6.6" width="9.2" height="10" rx="1.2" fill="#e3eefc" stroke="#7aa7e2" stroke-width="0.9"/><path d="M3 4.8 C6 3.4 9.6 4.2 11.2 7.4 L13.4 6.8 L12.4 13.4 L6.2 11.4 L8.2 10.4 C7.6 8.4 5.8 7.6 3.6 8.2 L5 6.6 Z" fill="#5cb81e" stroke="#2f8a18" stroke-width="0.7" stroke-linejoin="round"/><path d="M6.2 5.6 C8.4 5.6 10 6.6 10.8 8.8 L12.2 8.6 L11.6 12.2 L9 11.2 C9.4 9 8.2 6.6 6.2 5.6 Z" fill="#c6ef4c"/></svg>
<svg style="left:1036px;top:36px" width="10" height="9" viewBox="0 0 10 9"><path d="M1.3 1.3 L8.7 7.8 M8.7 1.3 L1.3 7.8" stroke="#000" stroke-width="1.7" fill="none"/></svg>
<svg style="left:783px;top:664px" width="17" height="16" viewBox="0 0 17 16"><rect x="2.9" y="2.6" width="12.6" height="12.6" fill="#fdfeff" stroke="#79a3dc" stroke-width="0.9"/><path d="M3 6.4H15.4M3 9.4H15.4M3 12.4H15.4M6.9 6.4V15M11.2 6.4V15" stroke="#a9c6ec" stroke-width="0.9" fill="none"/><rect x="7.5" y="3.6" width="7" height="1.1" fill="#7fc06f"/><rect x="0.5" y="0.5" width="6.2" height="8.2" rx="1.6" fill="#f0f0f0" stroke="#9a9a9a" stroke-width="0.9"/><rect x="2.6" y="2.4" width="2" height="4.6" fill="#c2c2c2" stroke="#a8a8a8" stroke-width="0.4"/></svg>
<svg style="left:807px;top:666px" width="11" height="12" viewBox="0 0 11 12"><rect x="0" y="0" width="3.6" height="12" fill="url(#gb)"/><path d="M10.4 0 L10.4 12 L3 6.0 Z" fill="url(#gb)"/></svg>
<svg style="left:826px;top:666px" width="15" height="12" viewBox="0 0 15 12"><path d="M7.5 0 L7.5 12 L0 6.0 Z" fill="url(#gb)"/><path d="M14.3 0 L14.3 12 L6.8 6.0 Z" fill="url(#gb)"/></svg>
<svg style="left:850px;top:666px" width="8" height="12" viewBox="0 0 8 12"><path d="M7.5 0 L7.5 12 L0 6.0 Z" fill="url(#gb)"/></svg>
<svg style="left:871px;top:666px" width="8" height="12" viewBox="0 0 8 12"><path d="M0 0 L0 12 L7.5 6.0 Z" fill="#8f8f8f"/></svg>
<svg style="left:889px;top:666px" width="15" height="12" viewBox="0 0 15 12"><path d="M0 0 L0 12 L7.5 6.0 Z" fill="#8f8f8f"/><path d="M6.8 0 L6.8 12 L14.3 6.0 Z" fill="#8f8f8f"/></svg>
<svg style="left:912px;top:666px" width="11" height="12" viewBox="0 0 11 12"><path d="M0 0 L0 12 L7.2 6.0 Z" fill="#8f8f8f"/><rect x="6.2" y="0" width="3.9" height="12" fill="#8f8f8f"/></svg>
<svg style="left:930px;top:664px" width="17" height="16" viewBox="0 0 17 16"><path d="M0.4 7.7 C0.5 3.2 5 1.5 9.6 2.1 V0.3 L13.5 3.9 L9.6 7.6 V5.8 C6.6 5.4 4.4 6 3.8 7.7 Z" fill="url(#gg)" stroke="#46a040" stroke-width="0.7" stroke-linejoin="round"/><path d="M16.1 8 C16 12.4 11.4 14 6.8 13.5 V15.5 L2.9 11.8 L6.8 8.2 V9.9 C9.8 10.3 12 9.7 12.6 8 Z" fill="url(#gg)" stroke="#46a040" stroke-width="0.7" stroke-linejoin="round"/></svg>
</div></body></html>
